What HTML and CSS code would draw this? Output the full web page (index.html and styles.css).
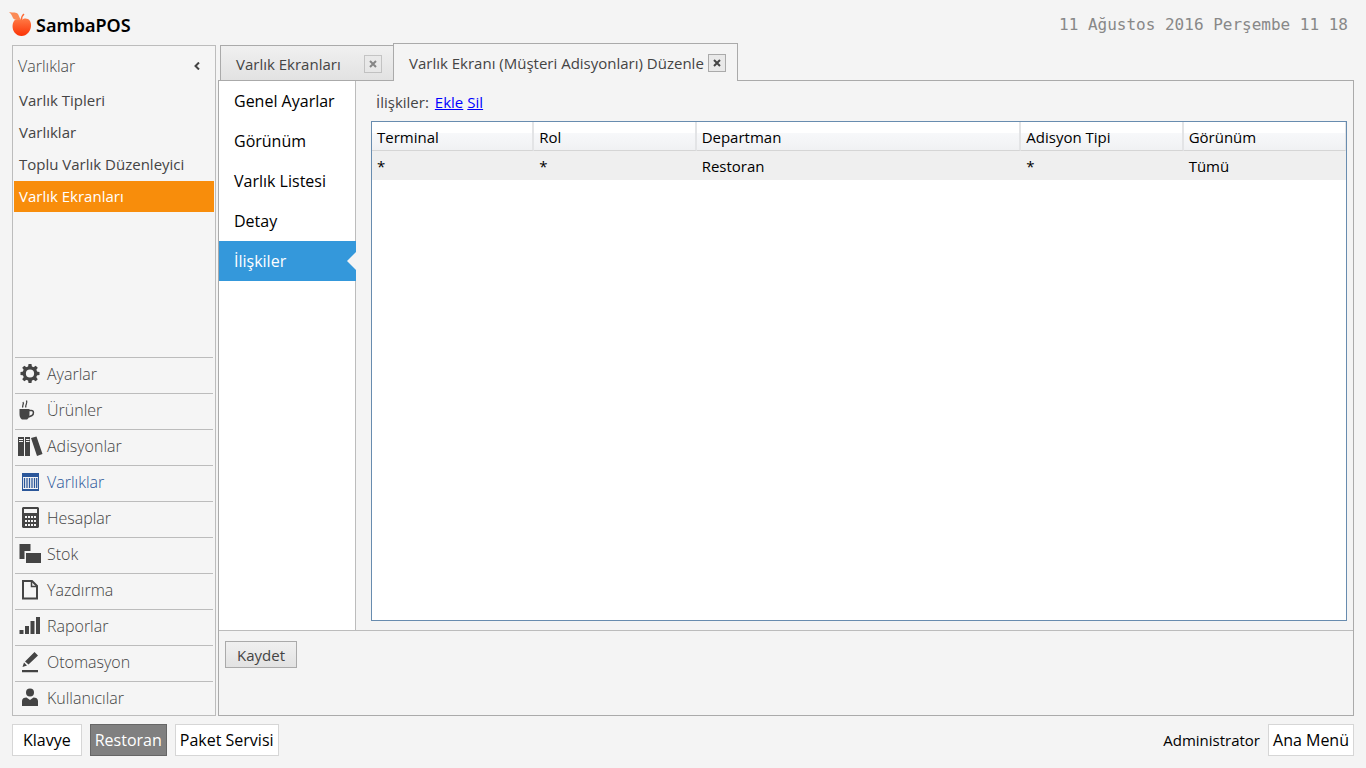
FILE: index.html
```html
<!DOCTYPE html>
<html lang="tr">
<head>
<meta charset="utf-8">
<title>SambaPOS</title>
<link rel="stylesheet" href="styles.css">
</head>
<body>
<header class="topbar">
  <div class="brand">
    <svg class="logo" viewBox="0 0 22 26" aria-hidden="true">
      <defs>
        <linearGradient id="apple" x1="0" y1="0" x2="0" y2="1">
          <stop offset="0" stop-color="#ff7a45"/>
          <stop offset="1" stop-color="#fb3306"/>
        </linearGradient>
      </defs>
      <path fill="url(#apple)" d="M12 8C14 6 18 6 20 9C22 12.500 21 17.500 18.500 20.500C16.500 23 14 24 11.500 24C9 24 6.500 23 4.500 20.500C2 17 2 12 4 9C6 6.500 9.500 6.500 12 8Z"/>
      <path fill="#fb8a55" d="M-1 0C2 1 5 -0.500 7.500 1.500C9 3 9 5.500 11 7.500C8 8 4.500 8.500 3 6C2 4 1.500 2 -1 0Z"/>
      <path fill="none" stroke="#ff6a35" stroke-width="1.500" d="M11.500 8C11.500 5.500 12 3.500 14 2"/>
    </svg>
    <span>SambaPOS</span>
  </div>
  <time class="clock" datetime="2016-08-11T11:18">11 Ağustos 2016 Perşembe 11 18</time>
</header>

<main class="workspace">
  <aside class="sidebar">
    <div class="side-head">
      <h2>Varlıklar</h2>
      <button class="collapse" type="button" aria-label="Daralt">
        <svg viewBox="0 0 8 8"><path d="M6 0.500L2.500 4L6 7.500" fill="none" stroke="#444" stroke-width="2"/></svg>
      </button>
    </div>
    <nav class="side-links">
      <a href="#">Varlık Tipleri</a>
      <a href="#">Varlıklar</a>
      <a href="#">Toplu Varlık Düzenleyici</a>
      <a href="#" class="active">Varlık Ekranları</a>
    </nav>
    <nav class="modules">
      <a href="#"><svg viewBox="0 0 24 24"><circle cx="12" cy="11.500" r="5.700" fill="none" stroke="currentColor" stroke-width="3.200"/><g fill="currentColor"><path id="tooth" d="M10 5.500L10.500 2H13.500L14 5.500Z"/><use href="#tooth" transform="rotate(45 12 11.500)"/><use href="#tooth" transform="rotate(90 12 11.500)"/><use href="#tooth" transform="rotate(135 12 11.500)"/><use href="#tooth" transform="rotate(180 12 11.500)"/><use href="#tooth" transform="rotate(225 12 11.500)"/><use href="#tooth" transform="rotate(270 12 11.500)"/><use href="#tooth" transform="rotate(315 12 11.500)"/></g></svg>Ayarlar</a>
      <a href="#"><svg viewBox="0 0 24 24"><path fill="currentColor" d="M1.500 11H11.500V16C11.500 19 10 21.500 8.500 21.500H4.500C3 21.500 1.500 19 1.500 16Z"/><path fill="none" stroke="currentColor" stroke-width="1.500" d="M11 12.500H13.500C16 12.500 16 16 14 17.500L10.500 19"/><path fill="none" stroke="currentColor" stroke-width="1.300" d="M5 9.500C3.500 7.500 6.500 6.500 5 4M8 9.500C6.500 7 10 6 8.500 2.500"/></svg>Ürünler</a>
      <a href="#"><svg viewBox="0 0 24 24"><path fill="currentColor" d="M0 3H6V22H0ZM7 3H12V22H7ZM13 4L18.500 2.500L24.500 20L19 22Z"/><path stroke="#f5f5f5" d="M1 5.500H5M1 7.500H5M8 5.500H11.500M8 7.500H11.500"/></svg>Adisyonlar</a>
      <a href="#" class="current"><svg viewBox="0 0 24 24"><path fill="#2b579a" d="M4 3H21V21H4Z"/><path fill="#f5f5f5" d="M5 7H20V19H5Z"/><path fill="none" stroke="#2b579a" stroke-width="1.300" d="M6.500 8V18M9 8V18M11.500 8V18M14 8V18M16.500 8V18M18.700 8V18"/></svg>Varlıklar</a>
      <a href="#"><svg viewBox="0 0 24 24"><path fill="currentColor" d="M5 1H20L21 2V21L20 22H5L4 21V2Z"/><path fill="#f5f5f5" d="M6 3H19V7H6ZM7 10H9V12H7ZM10 10H12V12H10ZM13 10H15V12H13ZM16 10H18V12H16ZM7 14H9V16H7ZM10 14H12V16H10ZM13 14H15V16H13ZM16 14H18V16H16ZM7 18H9V20H7ZM10 18H12V20H10ZM13 18H15V20H13ZM16 18H18V20H16Z"/></svg>Hesaplar</a>
      <a href="#"><svg viewBox="0 0 24 24"><path fill="currentColor" d="M1.500 2H12.500V9H6.500V17H1.500ZM8 11H23V21H8Z"/></svg>Stok</a>
      <a href="#"><svg viewBox="0 0 24 24"><path fill="none" stroke="currentColor" stroke-width="2" d="M5 3H14L19 8V20.500H5Z"/><path fill="none" stroke="currentColor" stroke-width="1.500" d="M13.500 3V8.500H19"/></svg>Yazdırma</a>
      <a href="#"><svg viewBox="0 0 24 24"><path fill="currentColor" d="M1.500 16H5.500V20H1.500ZM7 12H11V20H7ZM12.500 7H16.500V20H12.500ZM18 3H22V20H18Z"/></svg>Raporlar</a>
      <a href="#"><svg viewBox="0 0 24 24"><path fill="currentColor" d="M4 20H20V22.300H4ZM4.500 17L6 12.500L9 15.500ZM7 11.500L16.500 2L20 5.500L10.500 14.500Z"/></svg>Otomasyon</a>
      <a href="#"><svg viewBox="0 0 24 24"><circle cx="12" cy="6.500" r="4" fill="currentColor"/><path fill="currentColor" d="M4 20V15C4 12.500 6 11.500 8.500 11.500L12 14L15.500 11.500C18 11.500 20 12.500 20 15V20Z"/></svg>Kullanıcılar</a>
    </nav>
  </aside>

  <section class="content">
    <div class="tabs">
      <div class="tab"><span>Varlık Ekranları</span><button class="close" type="button" aria-label="Kapat"><svg viewBox="0 0 8 8"><path d="M1 1L7 7M7 1L1 7"/></svg></button></div>
      <div class="tab selected"><span>Varlık Ekranı (Müşteri Adisyonları) Düzenle</span><button class="close" type="button" aria-label="Kapat"><svg viewBox="0 0 8 8"><path d="M1 1L7 7M7 1L1 7"/></svg></button></div>
    </div>
    <div class="panel">
      <div class="editor">
        <nav class="pages">
          <a href="#">Genel Ayarlar</a>
          <a href="#">Görünüm</a>
          <a href="#">Varlık Listesi</a>
          <a href="#">Detay</a>
          <a href="#" class="active">İlişkiler</a>
        </nav>
        <div class="relations">
          <div class="actions"><span class="label">İlişkiler:</span><a href="#">Ekle</a><a href="#">Sil</a></div>
          <div class="grid">
            <table>
              <colgroup><col class="one"><col class="one"><col class="two"><col class="one"><col class="one"></colgroup>
              <thead><tr><th>Terminal</th><th>Rol</th><th>Departman</th><th>Adisyon Tipi</th><th>Görünüm</th></tr></thead>
              <tbody><tr><td>*</td><td>*</td><td>Restoran</td><td>*</td><td>Tümü</td></tr></tbody>
            </table>
          </div>
        </div>
      </div>
      <div class="savebar"><button class="save" type="button">Kaydet</button></div>
    </div>
  </section>
</main>

<footer class="bottombar">
  <button class="flat wide" type="button">Klavye</button>
  <button class="flat pressed" type="button">Restoran</button>
  <button class="flat" type="button">Paket Servisi</button>
  <span class="user">Administrator</span>
  <button class="flat" type="button">Ana Menü</button>
</footer>
</body>
</html>
```
FILE: styles.css
```css
* { box-sizing: border-box; }

body {
  margin: 0;
  min-height: 100vh;
  display: flex;
  flex-direction: column;
  background: #f4f4f4;
  color: #444;
  font: 15px/20px "Open Sans", "Noto Sans", sans-serif;
}

a { color: inherit; text-decoration: none; }
button { font: inherit; color: inherit; margin: 0; cursor: pointer; }

.topbar {
  height: 43px;
  padding: 7px 18px 0 10px;
  display: flex;
  justify-content: space-between;
}
.brand {
  display: flex;
  align-items: center;
  gap: 4px;
  color: #000;
  font: 600 18px/36px "Noto Sans", "Open Sans", sans-serif;
}
.logo { width: 22px; height: 26px; overflow: visible; }
.clock {
  color: #888;
  font: 16px/36px "DejaVu Sans Mono", monospace;
}

.workspace {
  flex: 1;
  display: flex;
  gap: 2px;
  padding: 0 12px;
}

.sidebar {
  width: 204px;
  margin-top: 2px;
  padding: 0 1px;
  display: flex;
  flex-direction: column;
  border: 1px solid #bcbcbc;
  background: #f5f5f5;
}
.side-head {
  height: 39px;
  padding: 0 13px 0 4px;
  display: flex;
  align-items: center;
  justify-content: space-between;
}
.side-head h2 { margin: 0; font-size: 16px; font-weight: 300; }
.collapse { width: 8px; height: 8px; padding: 0; border: 0; background: none; display: flex; }
.side-links { flex: 1; display: flex; flex-direction: column; gap: 1px; }
.side-links a { padding: 0 5px; line-height: 31px; }
.side-links .active { background: #f88d0b; color: #fff; }

.modules { padding: 0 1px; font-size: 16px; font-weight: 300; }
.modules a {
  display: flex;
  align-items: center;
  gap: 5px;
  padding: 0 3px 3px;
  border-top: 1px solid #bcbcbc;
  line-height: 32px;
}
.modules a:last-child { padding-bottom: 1px; }
.modules svg { width: 24px; height: 24px; overflow: visible; }
.modules .current { color: #2b579a; }

.content { flex: 1; min-width: 0; display: flex; flex-direction: column; }
.tabs { display: flex; align-items: flex-end; padding-left: 2px; }
.tab {
  display: flex;
  align-items: center;
  justify-content: space-between;
  height: 35px;
  width: 173px;
  padding: 2px 11px 0 15px;
  border: 1px solid #aaa;
  border-width: 1px 0 0 1px;
  background: linear-gradient(#f0f0f0, #e2e2e2);
}
.tab.selected {
  width: auto;
  height: 38px;
  gap: 4px;
  margin-bottom: -1px;
  padding: 0 11px 0 15px;
  border-width: 1px 1px 0;
  background: #f4f4f4;
  z-index: 1;
}
.close {
  width: 18px;
  height: 18px;
  padding: 0;
  display: flex;
  align-items: center;
  justify-content: center;
  border: 1px solid #aaa;
  background: #e9e9e9;
}
.close svg { width: 8px; height: 8px; }
.close path { stroke: #444; stroke-width: 2; }
.tab:not(.selected) .close { opacity: .6; }

.panel { flex: 1; display: flex; flex-direction: column; border: 1px solid #aaa; }
.editor { flex: 1; display: flex; }
.pages {
  width: 137px;
  border-right: 1px solid #bcbcbc;
  background: #fff;
  color: #000;
  font-size: 16px;
}
.pages a { display: block; padding: 1px 0 0 15px; line-height: 39px; }
.pages .active { position: relative; margin-right: -1px; background: #3498db; color: #fff; }
.pages .active::after {
  content: "";
  position: absolute;
  right: 0;
  top: 11px;
  border: solid transparent;
  border-width: 9px 9px 9px 0;
  border-right-color: #f4f4f4;
}
.relations { flex: 1; min-width: 0; display: flex; flex-direction: column; padding: 0 6px 9px 15px; }
.actions { display: flex; gap: 4px; padding: 3px 0 0 5px; line-height: 37px; }
.actions .label { margin-right: 2px; }
.actions a { color: #00f; text-decoration: underline; }
.grid { flex: 1; border: 1px solid #688caf; background: #fff; color: #000; }
table { width: 100%; table-layout: fixed; border-collapse: separate; border-spacing: 0; }
.one { width: 16.66%; }
.two { width: 33.33%; }
th, td { height: 29px; padding: 0 5px; text-align: left; font-weight: 400; }
th {
  padding-top: 2px;
  border-right: 2px solid #e3e4e6;
  border-bottom: 1px solid #d5d5d5;
  background: linear-gradient(#fff 40%, #f7f8fa 41%, #f0f1f3);
}
th:last-child { border-right-width: 1px; }
td { background: #efefef; }

.savebar { height: 85px; padding: 10px 6px; border-top: 1px solid #bcbcbc; }
.save {
  width: 72px;
  height: 27px;
  padding: 0;
  border: 1px solid #aaa;
  background: linear-gradient(#f0f0f0, #e2e2e2);
}

.bottombar {
  display: flex;
  align-items: center;
  gap: 8px;
  padding: 8px 12px 12px;
  color: #000;
}
.flat { height: 32px; padding: 0 4px; border: 1px solid #d6d6d6; background: #fff; font-size: 16px; }
.flat.wide { padding: 0 10px; }
.flat.pressed { background: #808080; border-color: #666; color: #fff; }
.user { margin-left: auto; }
```
